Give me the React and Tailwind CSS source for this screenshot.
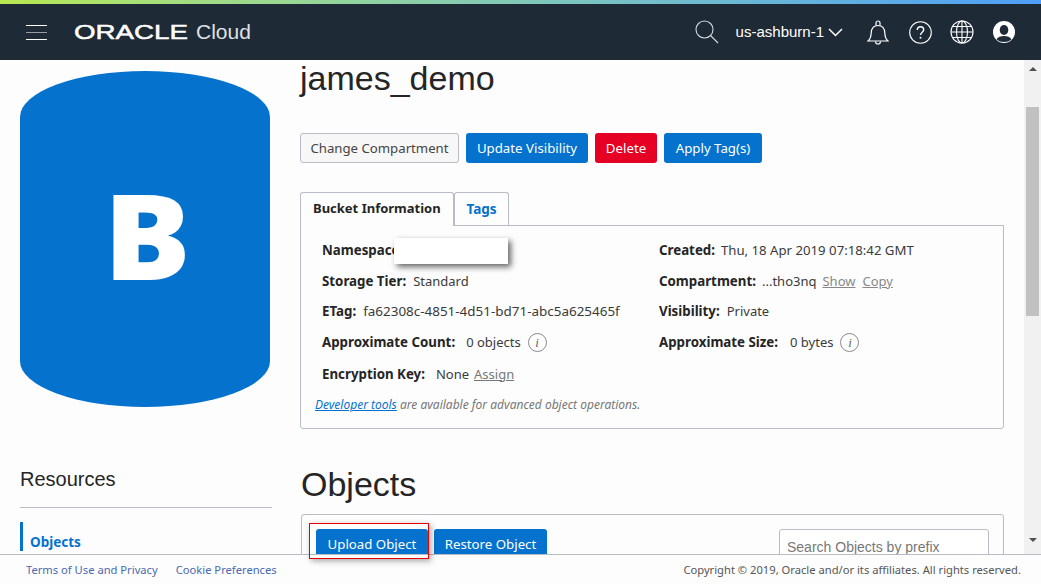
const body = "font-['Noto_Sans','Open_Sans',sans-serif]";
const arial = "font-['Liberation_Sans',Arial,sans-serif]";

function SearchIcon() {
  return (
    <svg width="24" height="24" viewBox="0 0 24 24" fill="none" stroke="#d5d8dc" strokeWidth="1.1">
      <circle cx="9.5" cy="9.5" r="8.5" />
      <path d="M15.5 15.5 23 23" />
    </svg>
  );
}

function BellIcon() {
  return (
    <svg width="22" height="25" viewBox="0 0 22 25" fill="none" stroke="#fff" strokeWidth="1.2">
      <path d="M1 21c2.5-2 3-4 3.2-8 .2-4.500 2.300-7.500 6.800-7.500s6.600 3 6.800 7.500c.2 4 .7 6 3.200 8z" />
      <path d="M9 5.500V3a2 2 0 0 1 4 0v2.500" />
      <path d="M8.500 21.500a2.500 2.500 0 0 0 5 0" />
    </svg>
  );
}

function HelpIcon() {
  return (
    <svg width="23" height="23" viewBox="0 0 23 23" fill="none" stroke="#fff" strokeWidth="1.1">
      <circle cx="11.500" cy="11.500" r="10.800" />
      <path d="M8.300 9c0-2 1.400-3.200 3.200-3.200s3.200 1.200 3.200 3c0 2.400-3.200 2.400-3.200 5.200" strokeWidth="1.4" />
      <path d="M11.500 15.800v1.800" strokeWidth="1.6" />
    </svg>
  );
}

function GlobeIcon() {
  return (
    <svg width="24" height="24" viewBox="0 0 24 24" fill="none" stroke="#fff" strokeWidth="1.1">
      <circle cx="12" cy="12" r="11" />
      <ellipse cx="12" cy="12" rx="5.500" ry="11" />
      <path d="M12 1v22M1 12h22M2.500 6.500h19M2.500 17.500h19" />
    </svg>
  );
}

function UserIcon() {
  return (
    <svg width="22" height="22" viewBox="0 0 22 22">
      <circle cx="11" cy="11" r="11" fill="#fff" />
      <ellipse cx="11" cy="9" rx="4.300" ry="5" fill="#1f2a37" />
      <path d="M3.500 18.500c1.500-3 4-3.500 7.500-3.500s6 .5 7.500 3.500C16.500 20.200 14 21 11 21s-5.500-.8-7.500-2.500z" fill="#1f2a37" />
    </svg>
  );
}

function InfoIcon() {
  return (
    <span className="ml-[7px] flex h-[19px] w-[19px] items-center justify-center rounded-full border-[1.5px] border-[#8a8a8a] font-['Liberation_Serif',serif] text-[13px] text-[#666] italic">
      i
    </span>
  );
}

function Header() {
  return (
    <header className="flex h-[56px] shrink-0 items-center bg-[#1f2a37] pr-[26px] pl-[26px] text-white">
      <div className="flex w-[21px] flex-col gap-[6px]">
        <div className="h-px bg-white" />
        <div className="h-px bg-[#9a9ea4]" />
        <div className="h-px bg-white" />
      </div>
      <div className={`-mt-px ml-[27px] w-[122px] origin-left scale-x-[1.32] text-[21px] leading-none [-webkit-text-stroke:0.5px_white] ${arial}`}>
        ORACLE
      </div>
      <div className={`-mt-px text-[21px] leading-none text-[#dfe1e4] ${arial}`}>Cloud</div>
      <div className="ml-auto flex items-center">
        <SearchIcon />
        <span className={`ml-[17px] text-[15px] ${arial}`}>us-ashburn-1</span>
        <svg className="ml-[4px]" width="15" height="9" viewBox="0 0 15 9" fill="none" stroke="#fff" strokeWidth="1.5">
          <path d="M1 1l6.500 6.500L14 1" />
        </svg>
        <div className="ml-[24px]"><BellIcon /></div>
        <div className="ml-[20px]"><HelpIcon /></div>
        <div className="ml-[18px]"><GlobeIcon /></div>
        <div className="ml-[19px]"><UserIcon /></div>
      </div>
    </header>
  );
}

function Sidebar() {
  return (
    <aside className="w-[300px] shrink-0 pl-5">
      <div className="mt-[11px] flex h-[336px] w-[250px] items-center justify-center rounded-[125px/46px] bg-[#0572ce]">
        <span className="-mt-[9px] ml-1 scale-x-[1.09] font-['Open_Sans',sans-serif] text-[119px] leading-none font-extrabold text-white">B</span>
      </div>
      <div className={`mt-[60px] text-[20px] leading-[24px] text-[#252525] ${arial}`}>Resources</div>
      <div className="mt-4 h-px w-[252px] bg-[#b7bcc6]" />
      <div className="mt-[14px] border-l-[3px] border-[#0572ce] pt-[11px] pl-[7px] text-[13.500px] leading-[18px] font-bold text-[#0572ce]">
        Objects
      </div>
    </aside>
  );
}

function Btn({ children, className = "" }) {
  return (
    <button className={`h-[30px] shrink-0 rounded-[3px] pt-px text-center text-[13.250px] whitespace-nowrap text-white ${className}`}>
      {children}
    </button>
  );
}

function Row({ label, children, gap = "ml-[7px]", className = "" }) {
  return (
    <div className={`flex h-[19px] items-center whitespace-nowrap ${className}`}>
      <b className="text-[13.300px] font-bold text-[#252525]">{label}</b>
      <span className={`flex items-center ${gap}`}>{children}</span>
    </div>
  );
}

function MainColumn() {
  return (
    <div className="w-[704px] shrink-0 text-[13px] text-[#3a3a3a]">
      <h1 className={`h-[37px] text-[34px] leading-[37px] text-[#252525] ${arial}`}>james_demo</h1>

      <div className="mt-9 flex">
        <button className="h-[30px] w-[159px] rounded-[3px] border border-[#b7bcc6] bg-[#f7f7f7] pt-px text-[13.200px] text-[#444]">
          Change Compartment
        </button>
        <Btn className="ml-[7px] w-[122px] bg-[#0572ce]">Update Visibility</Btn>
        <Btn className="ml-[7px] w-[62px] bg-[#e60023]">Delete</Btn>
        <Btn className="ml-[7px] w-[98px] bg-[#0572ce]">Apply Tag(s)</Btn>
      </div>

      <div className="mt-[29px] flex h-[33px]">
        <div className="z-10 h-[34px] w-[154px] rounded-t-[3px] border border-b-0 border-[#b7bcc6] bg-[#fdfdfd] pt-[6px] pl-3 text-[13px] font-bold text-[#252525]">
          Bucket Information
        </div>
        <div className="h-[33px] w-[55px] rounded-t-[3px] border border-b-0 border-[#b7bcc6] pt-[6px] text-center text-[13.500px] font-bold text-[#0572ce]">
          Tags
        </div>
      </div>

      <section className="h-[204px] rounded-b-[3px] border border-[#b7bcc6] pt-[15px] pl-[21px]">
        <div className="grid grid-cols-[337px_1fr]">
          <div className="flex flex-col gap-3">
            <Row label="Namespace"> </Row>
            <Row label="Storage Tier:">Standard</Row>
            <Row label="ETag:" className="-mt-px"><span className="text-[13.450px]">fa62308c-4851-4d51-bd71-abc5a625465f</span></Row>
            <Row label="Approximate Count:" gap="ml-[11px]">0 objects<InfoIcon /></Row>
            <Row label="Encryption Key:" gap="ml-[11px]" className="mt-px">
              None<a className="ml-[5px] text-[#777] underline">Assign</a>
            </Row>
          </div>
          <div className="flex flex-col gap-3">
            <Row label="Created:" gap="ml-[6px]"><span className="text-[13.200px]">Thu, 18 Apr 2019 07:18:42 GMT</span></Row>
            <Row label="Compartment:" gap="ml-[6px]">
              ...tho3nq
              <a className="ml-[6px] text-[#888] underline">Show</a>
              <a className="ml-[7px] text-[#888] underline">Copy</a>
            </Row>
            <Row label="Visibility:" className="-mt-px">Private</Row>
            <Row label="Approximate Size:" gap="ml-[12px]">0 bytes<InfoIcon /></Row>
          </div>
        </div>
        <p className="mt-[12px] -ml-[7px] text-[12px] text-[#777] italic">
          <a className="text-[#0572ce] underline">Developer tools</a> are available for advanced object operations.
        </p>
      </section>

      <h2 className={`mt-[35px] ml-px h-[40px] text-[34px] leading-[40px] text-[#252525] ${arial}`}>Objects</h2>

      <section className="mt-[10px] ml-px flex h-[80px] items-start rounded-[3px] border border-[#b7bcc6] pt-[14px] pl-[14px]">
        <Btn className="w-[112px] bg-[#0572ce]">Upload Object</Btn>
        <Btn className="ml-[6px] w-[113px] bg-[#0572ce]">Restore Object</Btn>
        <div className={`ml-[232px] h-[40px] w-[210px] rounded-[3px] border border-[#b7bcc6] bg-white pt-[7px] pl-[7px] text-[14px] text-[#777] ${arial}`}>
          Search Objects by prefix
        </div>
      </section>
    </div>
  );
}

function Scrollbar() {
  return (
    <div className="flex w-[17px] shrink-0 flex-col items-center bg-[#f1f1f1] pt-[7px]">
      <div className="h-0 w-0 border-x-[4px] border-b-[4px] border-x-transparent border-b-[#505050]" />
      <div className="mt-9 h-[209px] w-[13px] bg-[#c1c1c1]" />
      <div className="mt-[222px] h-0 w-0 border-x-[4px] border-t-[4px] border-x-transparent border-t-[#505050]" />
    </div>
  );
}

function Footer() {
  return (
    <footer className="flex h-[30px] shrink-0 items-center justify-between border-t border-[#b7bcc6] bg-[#fdfdfd] pt-[2px] pr-5 pl-[26px] text-[11.200px] text-[#555]">
      <div className="flex gap-[18px] text-[#4a69b0]">
        <a>Terms of Use and Privacy</a>
        <a>Cookie Preferences</a>
      </div>
      <span>Copyright © 2019, Oracle and/or its affiliates. All rights reserved.</span>
    </footer>
  );
}

export default function App() {
  return (
    <div className={`relative flex h-[584px] w-[1041px] flex-col overflow-hidden bg-[#fdfdfd] ${body}`}>
      <div className="h-1 shrink-0 bg-gradient-to-r from-[#b8e84f] to-[#4f9ff8]" />
      <Header />
      <div className="flex min-h-0 flex-1">
        <div className="flex flex-1 overflow-hidden">
          <Sidebar />
          <MainColumn />
        </div>
        <Scrollbar />
      </div>
      <Footer />

      {/* redaction block and the red callout sit on top of the screenshot */}
      <div className="absolute top-[238px] left-[394px] h-[26px] w-[114px] bg-white shadow-[3px_3px_6px_rgba(0,0,0,0.6)]" />
      <div className="absolute top-[523px] left-[309px] h-[36px] w-[120px] border border-[#e60000] shadow-[2px_2px_6px_rgba(0,0,0,0.35)]" />
    </div>
  );
}
